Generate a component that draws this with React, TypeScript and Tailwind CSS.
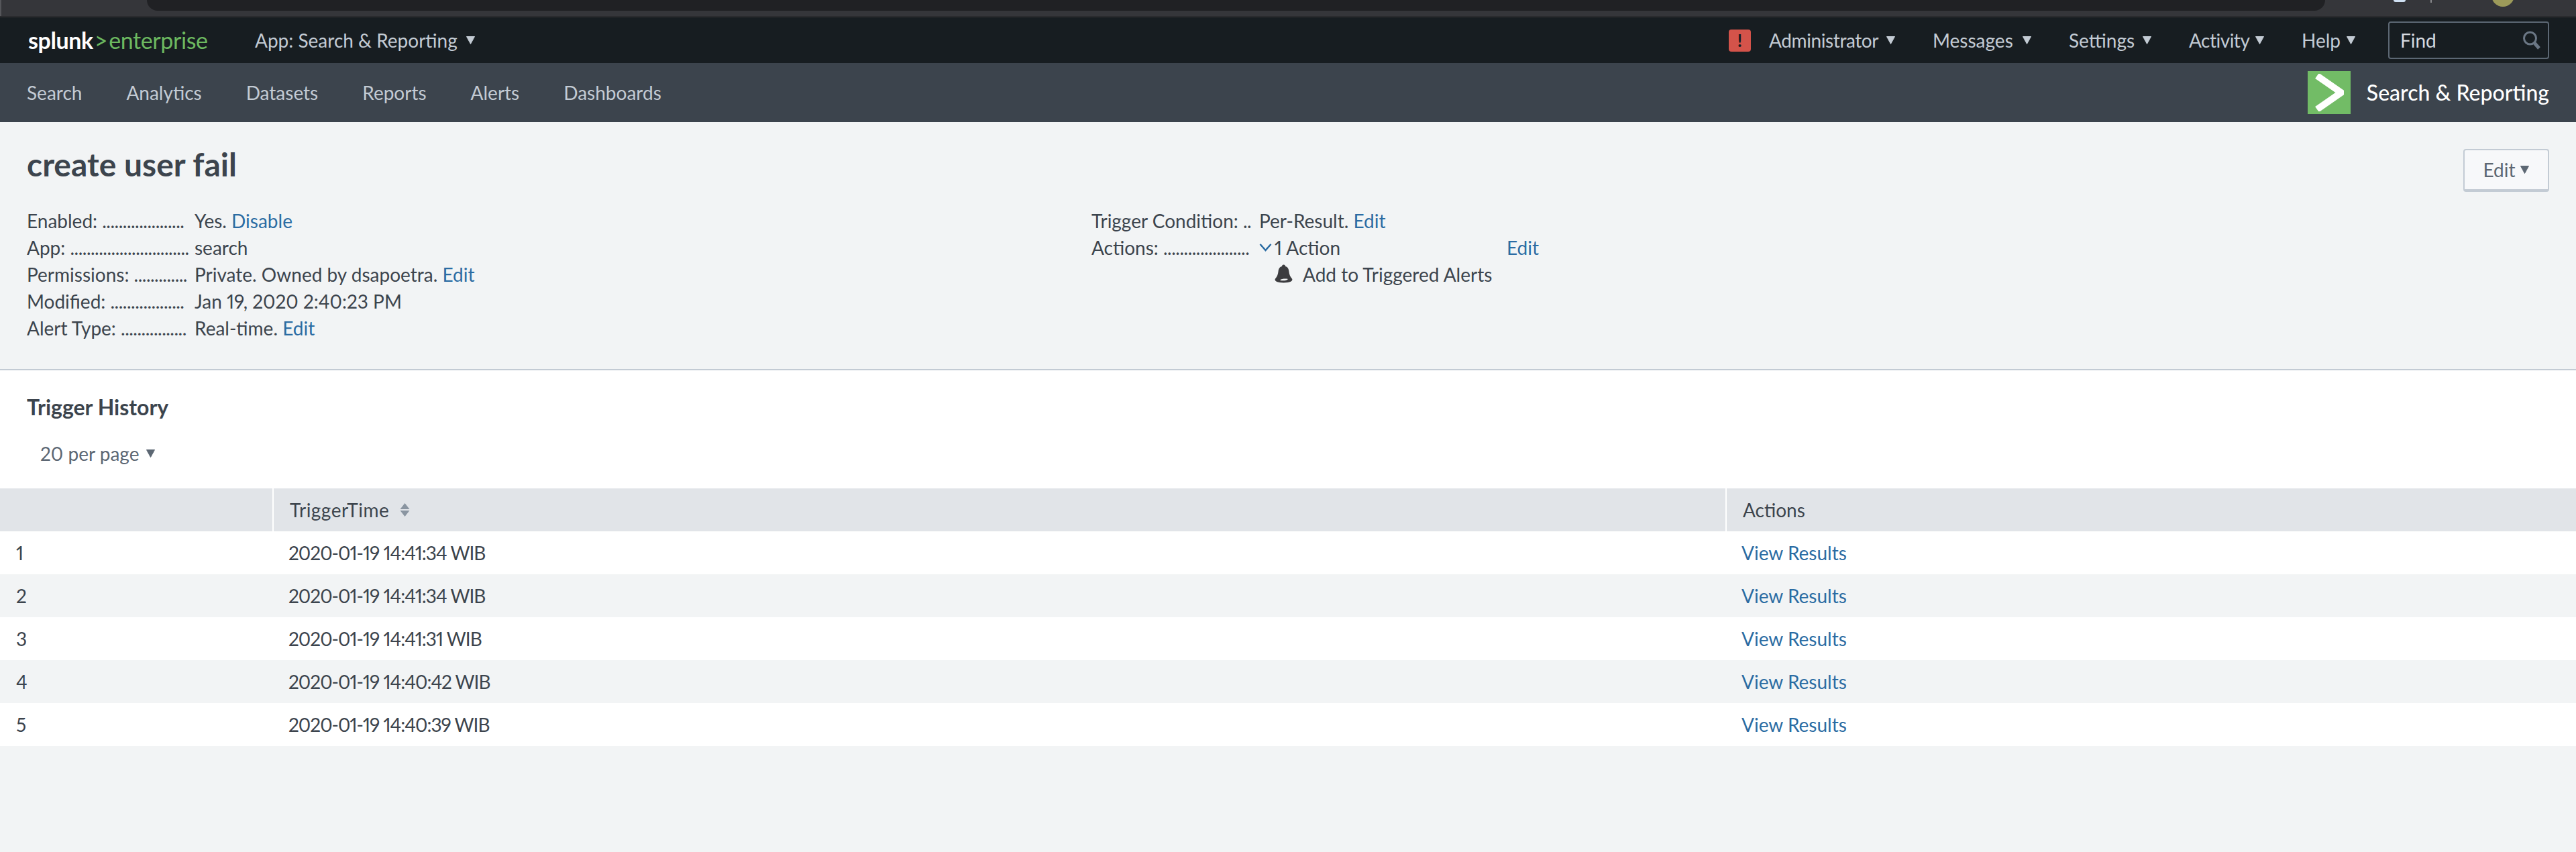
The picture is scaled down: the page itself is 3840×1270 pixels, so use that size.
import React from 'react';

const Caret: React.FC<{ className?: string }> = ({ className }) => (
  <svg className={className} width="15" height="14" viewBox="0 0 15 14" fill="currentColor">
    <path d="M1.500 1.500h12L7.500 12.500z" stroke="currentColor" strokeWidth="1" strokeLinejoin="round" />
  </svg>
);

const topMenus = [
  { label: 'Administrator', width: 'w-[165px] tracking-[-0.4px]' },
  { label: 'Messages', width: 'w-[124px]' },
  { label: 'Settings', width: 'w-[100px]' },
  { label: 'Activity', width: 'w-[89px] tracking-[-0.5px]' },
  { label: 'Help', width: 'w-[57px]' },
];

const navItems = ['Search', 'Analytics', 'Datasets', 'Reports', 'Alerts', 'Dashboards'];

const details = [
  { label: 'Enabled:', dots: 20, value: 'Yes.', link: 'Disable' },
  { label: 'App:', dots: 29, value: 'search', link: '' },
  { label: 'Permissions:', dots: 13, value: 'Private. Owned by dsapoetra.', link: 'Edit' },
  { label: 'Modified:', dots: 18, value: 'Jan 19, 2020 2:40:23 PM', link: '' },
  { label: 'Alert Type:', dots: 16, value: 'Real-time.', link: 'Edit' },
];

const history = [
  '2020-01-19 14:41:34 WIB',
  '2020-01-19 14:41:34 WIB',
  '2020-01-19 14:41:31 WIB',
  '2020-01-19 14:40:42 WIB',
  '2020-01-19 14:40:39 WIB',
];

const Leader: React.FC<{ label: string; dots: number }> = ({ label, dots }) => (
  <div className="w-[240px] mr-[10px] shrink-0 whitespace-nowrap">
    {label} <span className="tracking-[-0.5px]">{'.'.repeat(dots)}</span>
  </div>
);

const App: React.FC = () => {
  return (
    <div className="min-h-[1270px] bg-[#f2f4f5] font-['Lato','Liberation_Sans',sans-serif] proportional-nums text-[28px] leading-[40px] text-[#3c444d]">
      {/* browser chrome left over at the top of the capture */}
      <div className="h-[24px] bg-[#35363a] flex overflow-hidden">
        <div className="w-[219px] shrink-0 border-l-2 border-[#55565a]" />
        <div className="w-[3247px] h-[16px] bg-[#202124] rounded-b-[28px] shrink-0" />
        <div className="ml-[102px] w-[18px] h-[3px] rounded-b-full bg-[#cfe0f2] shrink-0" />
        <div className="ml-[37px] w-[2px] h-[4px] bg-[#8a8b8e] shrink-0" />
        <div className="ml-[89px] w-[34px] h-[34px] -mt-[24px] rounded-full bg-[#9c9a5a] shrink-0" />
      </div>
      <div className="h-[2px] bg-[#2a2b2e]" />

      {/* top bar */}
      <header className="h-[68px] bg-[#171d21] flex items-center pl-[42px] pr-[40px] text-[#c3cbd4]">
        <div className="w-[338px] flex items-baseline text-[34px] leading-[40px] tracking-[-0.4px] whitespace-nowrap">
          <span className="font-bold text-white">splunk</span>
          <span className="text-[#6cb960] mx-[2px]">&gt;</span>
          <span className="text-[#6cb960]">enterprise</span>
        </div>
        <div className="flex items-center gap-[12px] whitespace-nowrap">
          <span>App: Search &amp; Reporting</span>
          <Caret />
        </div>
        <div className="ml-auto flex items-center">
          <div className="w-[33px] h-[33px] mr-[27px] rounded-[4px] bg-[#d4534a] text-[#171d21] flex items-center justify-center font-bold text-[26px]">!</div>
          <div className="flex items-center gap-[55px] mr-[48px]">
            {topMenus.map(menu => (
              <div key={menu.label} className="flex items-center">
                <span className={`${menu.width} whitespace-nowrap`}>{menu.label}</span>
                <Caret className="ml-[9px]" />
              </div>
            ))}
          </div>
          <div className="w-[240px] h-[56px] border-2 border-[#5c6773] rounded-[4px] flex items-center justify-between pl-[16px] pr-[10px] text-[#d5dae0]">
            <span>Find</span>
            <svg width="28" height="28" viewBox="0 0 28 28" fill="none" stroke="#6b7785">
              <circle cx="11.500" cy="11" r="9" strokeWidth="3" />
              <path d="M18 18l7 8" strokeWidth="5" />
            </svg>
          </div>
        </div>
      </header>

      {/* app bar */}
      <nav className="h-[88px] bg-[#3c444d] flex items-center pl-[40px] pr-[40px]">
        <div className="flex gap-[66px] text-[#c3cbd4]">
          {navItems.map(item => (
            <span key={item}>{item}</span>
          ))}
        </div>
        <div className="ml-auto flex items-center gap-[24px] text-white text-[32px] font-medium">
          <div className="w-[64px] h-[64px] bg-[#72bc66] flex items-center justify-center">
            <svg width="44" height="56" viewBox="0 0 44 56" fill="none">
              <path d="M4 3l36 25L4 53" stroke="#fff" strokeWidth="10" />
            </svg>
          </div>
          <span className="whitespace-nowrap">Search &amp; Reporting</span>
        </div>
      </nav>

      {/* alert summary */}
      <section className="pt-[33px] pb-[41px] px-[40px] border-b-2 border-[#c3cbd4]">
        <div className="h-[60px] mb-[34px] flex justify-between">
          <h1 className="text-[48px] leading-[60px] font-bold">create user fail</h1>
          <button className="w-[128px] h-[64px] mt-[7px] bg-[#f7f8fa] border-2 border-b-[4px] border-[#c3cbd4] rounded-[4px] flex items-center justify-center gap-[6px] text-[#5c6773]">
            Edit
            <Caret />
          </button>
        </div>
        <div className="flex">
          <div className="w-[1587px] shrink-0">
            {details.map(row => (
              <div key={row.label} className="flex">
                <Leader label={row.label} dots={row.dots} />
                <div className="whitespace-nowrap">
                  {row.value}{' '}
                  {row.link && <a className="text-[#2b6ca3]">{row.link}</a>}
                </div>
              </div>
            ))}
          </div>
          <div>
            <div className="flex">
              <Leader label="Trigger Condition:" dots={2} />
              <div className="whitespace-nowrap">
                Per-Result. <a className="text-[#2b6ca3]">Edit</a>
              </div>
            </div>
            <div className="flex">
              <Leader label="Actions:" dots={21} />
              <svg className="mt-[13px] mr-[4px] shrink-0" width="19" height="14" viewBox="0 0 19 14" fill="none">
                <path d="M1.500 2l8 9 8-9" stroke="#2b6ca3" strokeWidth="2.500" />
              </svg>
              <div className="w-[346px] whitespace-nowrap">1 Action</div>
              <a className="text-[#2b6ca3]">Edit</a>
            </div>
            <div className="flex items-center pl-[273px]">
              <svg className="mr-[15px]" width="27" height="30" viewBox="0 0 27 30" fill="#3c3c3f">
                <path d="M11 3a2.500 2.500 0 0 1 5 0c4 1 5 4 5.500 8 .4 4 1.500 7 4.500 10.500 1.500 2.500-1 6-12.500 6S-.5 24 1 21.500C4 18 5 15 5.500 11 6 7 7 4 11 3z" />
                <path d="M8 23.500c2-2 9-2.500 12-1.500-2 2.500-8 3-12 1.500z" fill="#f2f4f5" />
              </svg>
              <span className="whitespace-nowrap">Add to Triggered Alerts</span>
            </div>
          </div>
        </div>
      </section>

      {/* trigger history */}
      <section className="bg-white pt-[35px] pb-[32px] pl-[40px]">
        <h2 className="text-[32px] leading-[40px] font-bold">Trigger History</h2>
        <div className="mt-[29px] ml-[20px] flex items-center gap-[10px] text-[#5c6773]">
          <span>20 per page</span>
          <Caret />
        </div>
      </section>

      <div className="grid grid-cols-[408px_2166px_1fr]">
        <div className="h-[64px] bg-[#e1e4e8] border-r-2 border-white" />
        <div className="h-[64px] bg-[#e1e4e8] border-r-2 border-white pl-[24px] flex items-center gap-[16px]">
          <span className="tracking-[0.5px]">TriggerTime</span>
          <svg width="15" height="20" viewBox="0 0 15 20" fill="#8a95a1">
            <path d="M7.500 0l7 9H.5zM7.500 20L.5 11h14z" />
          </svg>
        </div>
        <div className="h-[64px] bg-[#e1e4e8] pl-[24px] flex items-center">Actions</div>
        {history.map((time, i) => {
          const rowBg = i % 2 === 0 ? 'bg-white' : 'bg-[#f2f4f5]';
          return (
            <React.Fragment key={i}>
              <div className={`h-[64px] pl-[24px] flex items-center ${rowBg}`}>{i + 1}</div>
              <div className={`h-[64px] pl-[22px] flex items-center tracking-[-1px] ${rowBg}`}>{time}</div>
              <div className={`h-[64px] pl-[22px] flex items-center text-[#2b6ca3] ${rowBg}`}>View Results</div>
            </React.Fragment>
          );
        })}
      </div>
    </div>
  );
};

export default App;
